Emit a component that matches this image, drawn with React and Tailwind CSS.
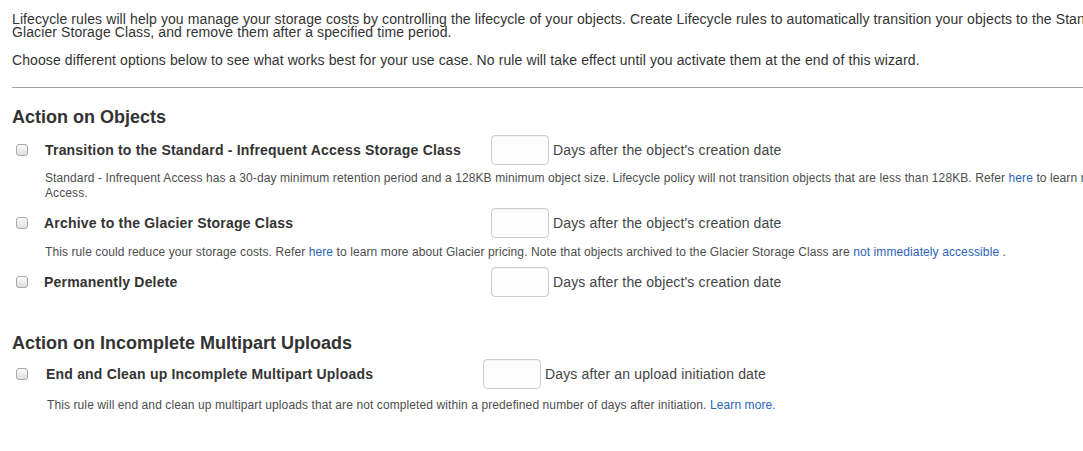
import React from "react";

const Check = () => (
  <input
    type="checkbox"
    className="appearance-none w-[12px] h-[12px] rounded-[3px] border border-[#a9a9a9] bg-gradient-to-b from-[#fbfbfb] to-[#dedede] shrink-0"
  />
);

const DaysInput = () => (
  <input
    type="text"
    className="w-[58px] h-[30px] rounded-[4px] border border-[#cccccc] bg-[#fdfdfd] shadow-[inset_0_1px_1px_rgba(0,0,0,0.05)] outline-none"
  />
);

const Link = ({ children }) => (
  <a href="#" className="text-[#2a64b8]">
    {children}
  </a>
);

const Rule = ({ label, labelWidth, checkGap, days, className }) => (
  <div className={`flex items-center h-[30px] ${className}`}>
    <div className="w-[4px] shrink-0" />
    <Check />
    <div className={`${checkGap} shrink-0`} />
    <div className={`${labelWidth} shrink-0 text-[14px] font-bold text-[#333] tracking-[0.2px]`}>
      {label}
    </div>
    <DaysInput />
    <span className="ml-[4px] text-[14px] text-[#444] tracking-[0.15px] whitespace-nowrap">{days}</span>
  </div>
);

export default function App() {
  return (
    <div
      className="w-[1083px] h-[451px] overflow-hidden bg-white text-[#333]"
      style={{ fontFamily: '"Liberation Sans", Arial, sans-serif' }}
    >
      <div className="w-[1200px] pl-[12px]">
        <p className="pt-[13px] text-[14px] leading-[13px] tracking-[0.1px] whitespace-nowrap">
          Lifecycle rules will help you manage your storage costs by controlling the lifecycle of your objects. Create Lifecycle rules to automatically transition your objects to the Standard - Infrequent Access Storage Class and/or archive them to the
          <br />
          Glacier Storage Class, and remove them after a specified time period.
        </p>
        <p className="mt-[15px] text-[14px] leading-[13px] tracking-[0.1px] whitespace-nowrap">
          Choose different options below to see what works best for your use case. No rule will take effect until you activate them at the end of this wizard.
        </p>
        <hr className="mt-[20px] border-0 border-t border-[#a3a3a3]" />

        <h2 className="mt-[19px] text-[18px] leading-[20px] font-bold text-[#333]">
          Action on Objects
        </h2>
        <Rule
          className="mt-[8px]"
          label="Transition to the Standard - Infrequent Access Storage Class"
          labelWidth="w-[446px]"
          checkGap="w-[17px]"
          days="Days after the object's creation date"
        />
        <p className="mt-[6px] pl-[33px] text-[12px] leading-[15px] tracking-[0.1px] text-[#4d4d4d] whitespace-nowrap">
          Standard - Infrequent Access has a 30-day minimum retention period and a 128KB minimum object size. Lifecycle policy will not transition objects that are less than 128KB. Refer <Link>here</Link> to learn more about Standard - Infrequent
          <br />
          Access.
        </p>
        <Rule
          className="mt-[7px]"
          label="Archive to the Glacier Storage Class"
          labelWidth="w-[447px]"
          checkGap="w-[16px]"
          days="Days after the object's creation date"
        />
        <p className="mt-[7px] pl-[33px] text-[12px] leading-[15px] tracking-[0.1px] text-[#4d4d4d] whitespace-nowrap">
          This rule could reduce your storage costs. Refer <Link>here</Link> to learn more about Glacier pricing. Note that objects archived to the Glacier Storage Class are <Link>not immediately accessible</Link> .
        </p>
        <Rule
          className="mt-[7px]"
          label="Permanently Delete"
          labelWidth="w-[447px]"
          checkGap="w-[16px]"
          days="Days after the object's creation date"
        />

        <h2 className="mt-[36px] text-[18px] leading-[20px] font-bold text-[#333]">
          Action on Incomplete Multipart Uploads
        </h2>
        <Rule
          className="mt-[6px]"
          label="End and Clean up Incomplete Multipart Uploads"
          labelWidth="w-[437px]"
          checkGap="w-[18px]"
          days="Days after an upload initiation date"
        />
        <p className="mt-[9px] pl-[35px] text-[12px] leading-[15px] tracking-[0.1px] text-[#4d4d4d] whitespace-nowrap">
          This rule will end and clean up multipart uploads that are not completed within a predefined number of days after initiation. <Link>Learn more.</Link>
        </p>
      </div>
    </div>
  );
}
